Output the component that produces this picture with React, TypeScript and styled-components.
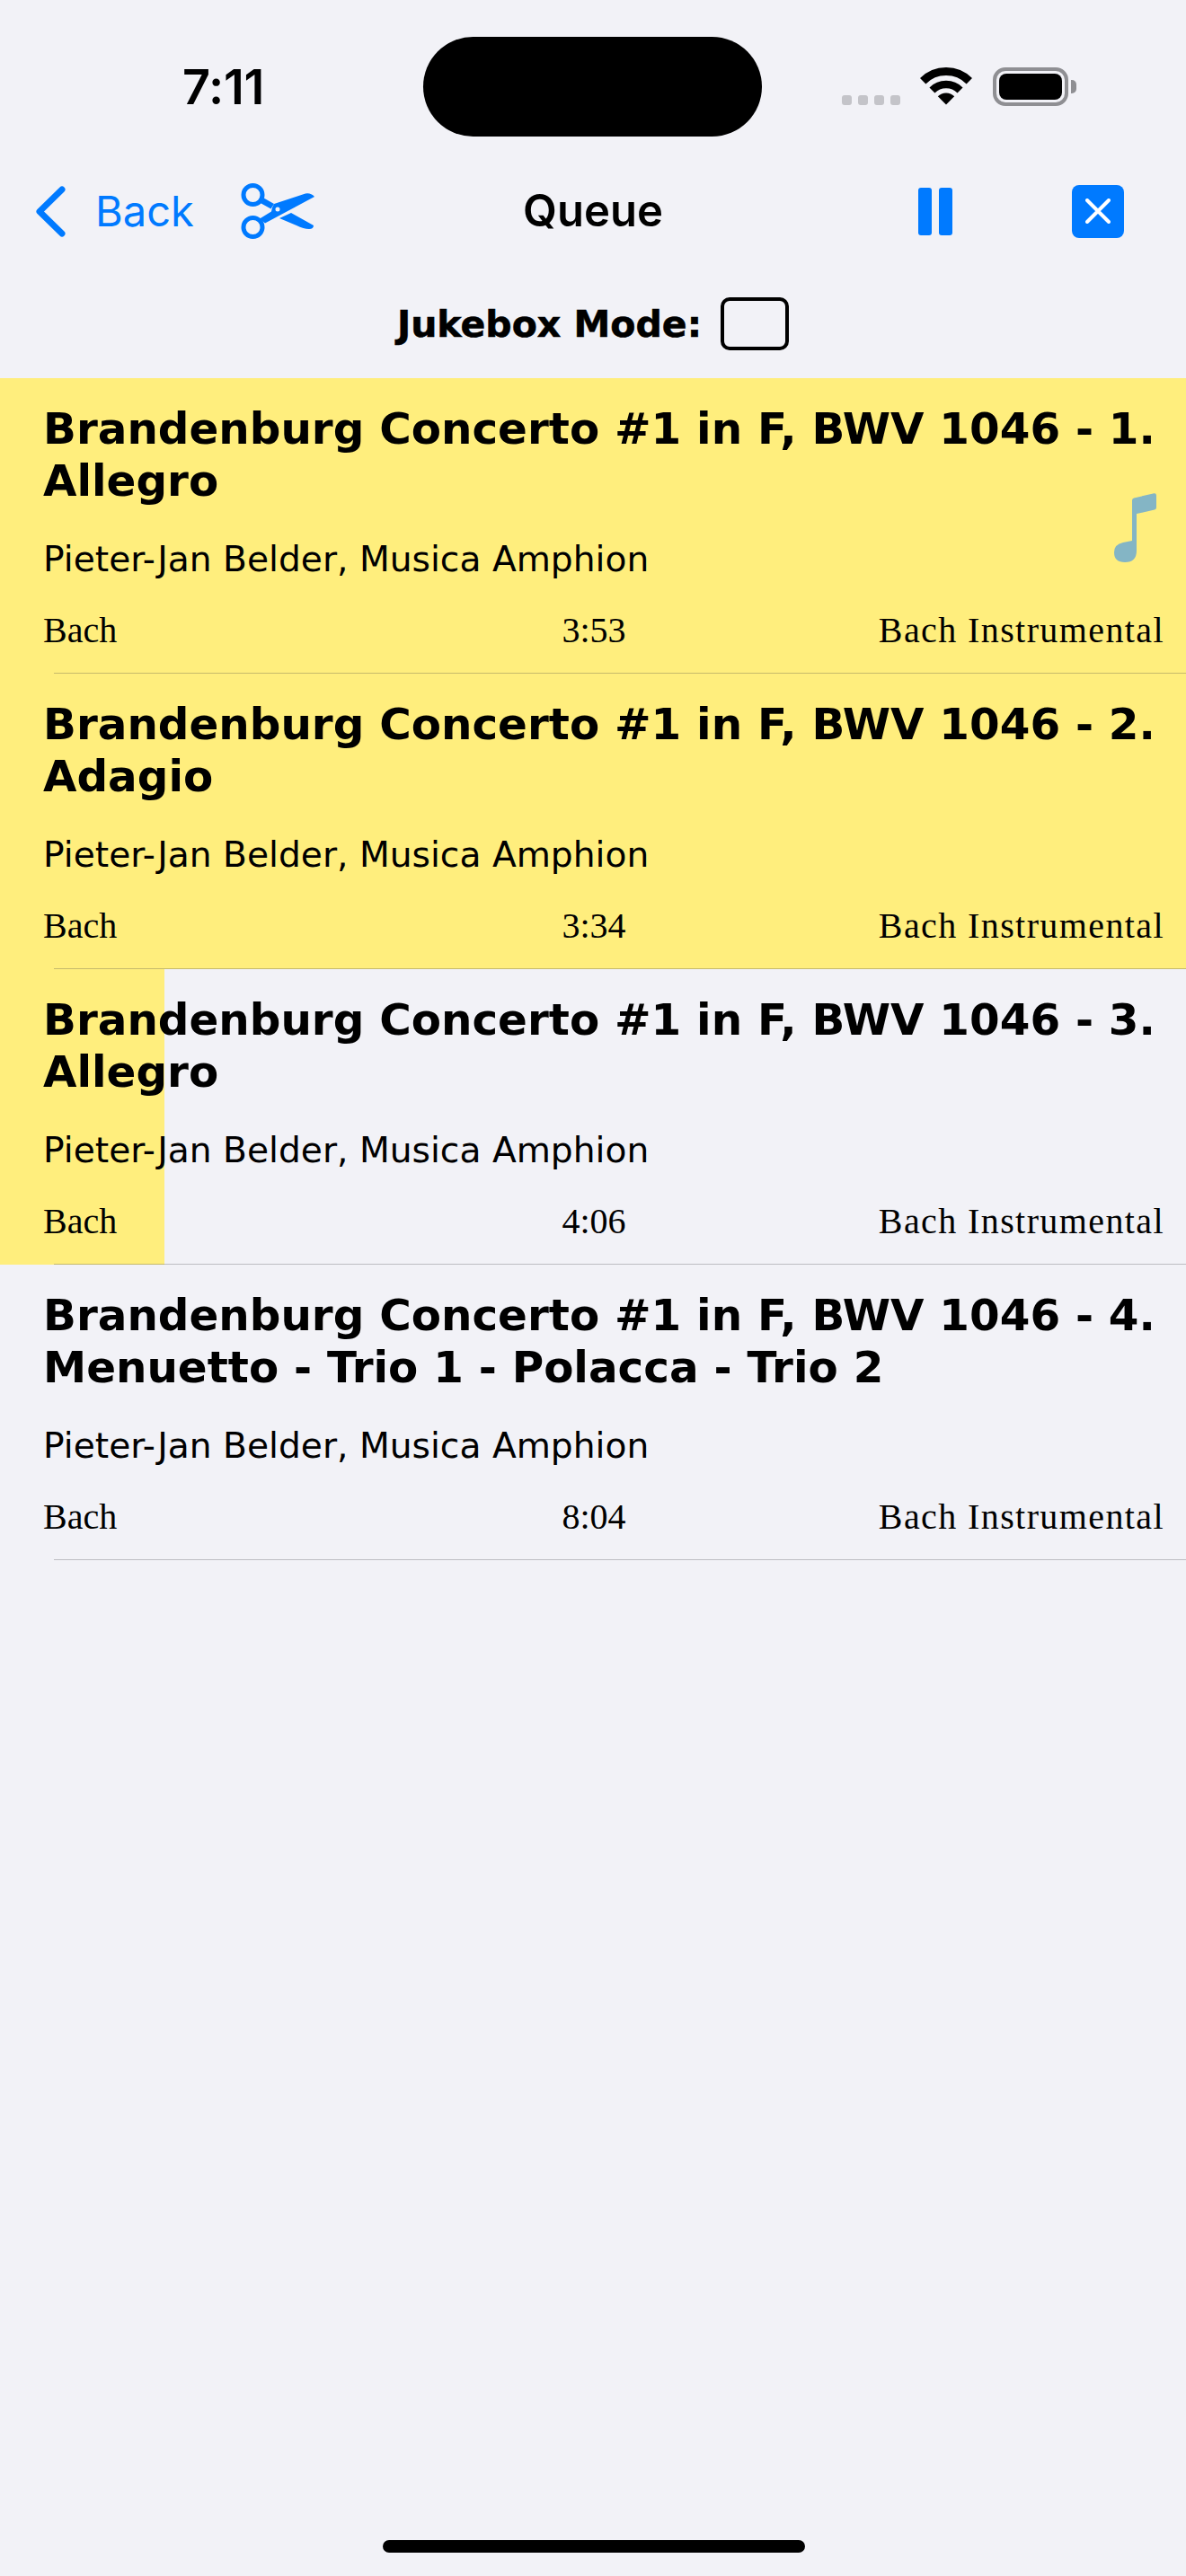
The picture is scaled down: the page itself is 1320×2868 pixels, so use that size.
import React from "react";
import styled, { createGlobalStyle } from "styled-components";

const tracks = [
    { part: "1. Allegro", time: "3:53", progress: 100, playing: true },
    { part: "2. Adagio", time: "3:34", progress: 100, playing: false },
    { part: "3. Allegro", time: "4:06", progress: 13.86, playing: false },
    { part: "4. Menuetto - Trio 1 - Polacca - Trio 2", time: "8:04", progress: 0, playing: false },
];

const App = () => (
    <Page>
        <GlobalStyle />
        <StatusBar>
            <Clock>7:11</Clock>
            <Island />
            <StatusIcons>
                <Dots>
                    <Dot />
                    <Dot />
                    <Dot />
                    <Dot />
                </Dots>
                <svg width="58" height="42" viewBox="0 0 58 42">
                    <path d="M3.2 15.2A36.5 36.5 0 0 1 54.8 15.2" fill="none" stroke="#000" strokeWidth="9" />
                    <path d="M13.44 25.44A22 22 0 0 1 44.56 25.44" fill="none" stroke="#000" strokeWidth="8.5" />
                    <path d="M29 41.5L19.8 32.3A13 13 0 0 1 38.2 32.3Z" fill="#000" />
                </svg>
                <Battery>
                    <BatteryFill />
                    <BatteryNub />
                </Battery>
            </StatusIcons>
        </StatusBar>

        <NavBar>
            <NavLeft>
                <svg width="33" height="57" viewBox="0 0 33 57">
                    <path d="M29 4L4 28.5L29 53" fill="none" stroke="#007aff" strokeWidth="7" strokeLinecap="round" strokeLinejoin="round" />
                </svg>
                <BackLabel>Back</BackLabel>
                <svg width="82" height="62" viewBox="0 0 82 62">
                    <g fill="none" stroke="#007aff" strokeWidth="5">
                        <circle cx="13.5" cy="13" r="10.5" />
                        <circle cx="13.5" cy="49" r="10.5" />
                    </g>
                    <path d="M23 15L37 23L33.5 28.5L20 21Z" fill="#007aff" />
                    <path
                        fillRule="evenodd"
                        d="M37 23L72 11.5Q78 10.5 82 15L27 44.5L21 39.5L34 31.5Q35 26 37 23ZM41 26.5A2.5 2.5 0 1 0 41 31.5A2.5 2.5 0 1 0 41 26.5Z"
                        fill="#007aff"
                    />
                    <path d="M43 39L56 33L81 47Q81 51 76 51Q70 51 62 47Z" fill="#007aff" />
                </svg>
            </NavLeft>
            <NavTitle>Queue</NavTitle>
            <NavRight>
                <PauseIcon>
                    <PauseBar />
                    <PauseBar />
                </PauseIcon>
                <CloseBox>
                    <svg width="28" height="28" viewBox="0 0 28 28">
                        <path d="M2 2L26 26M26 2L2 26" stroke="#fff" strokeWidth="4" strokeLinecap="round" />
                    </svg>
                </CloseBox>
            </NavRight>
        </NavBar>

        <JukeboxRow>
            <JukeboxLabel>Jukebox Mode:</JukeboxLabel>
            <Checkbox />
        </JukeboxRow>

        <List>
            {tracks.map((track) => (
                <Row key={track.part} $progress={track.progress}>
                    <Title>{`Brandenburg Concerto #1 in F, BWV 1046 - ${track.part}`}</Title>
                    <Artist>Pieter-Jan Belder, Musica Amphion</Artist>
                    <Meta>
                        <Composer>Bach</Composer>
                        <MetaText>{track.time}</MetaText>
                        <Genre>Bach Instrumental</Genre>
                    </Meta>
                    {track.playing && (
                        <NowPlaying width="47" height="77" viewBox="0 0 47 77">
                            <path
                                d="M20 8Q20 6 22 5.5L44.5 .2Q47 0 47 2.5L47 16Q47 18 45 18.5L25 23L25 64Q25 77 12 77Q0 77 0 66Q0 57 10 55L20 53Z"
                                fill="#84b5c5"
                            />
                        </NowPlaying>
                    )}
                </Row>
            ))}
        </List>

        <HomeIndicator />
    </Page>
);

export default App;

const GlobalStyle = createGlobalStyle`
    html, body {
        margin: 0;
        padding: 0;
        background: #f2f2f7;
    }
`;

const Page = styled.div`
    position: relative;
    height: 2868px;
    overflow: hidden;
    background: #f2f2f7;
    color: #000;
    font-family: Inter, sans-serif;
`;

const StatusBar = styled.div`
    display: grid;
    grid-template-columns: 471px 377px 1fr;
    height: 111px;
    padding-top: 41px;
`;

const Clock = styled.div`
    align-self: center;
    padding-left: 203px;
    font-size: 54px;
    font-weight: 600;
    line-height: 60px;
    letter-spacing: -0.3px;
`;

const Island = styled.div`
    background: #000;
    border-radius: 56px;
`;

const StatusIcons = styled.div`
    display: flex;
    align-items: flex-start;
    padding: 34px 0 0 89px;
`;

const Dots = styled.div`
    display: flex;
    gap: 7px;
    margin-top: 31px;
    margin-right: 22px;
`;

const Dot = styled.span`
    width: 11px;
    height: 11px;
    border-radius: 3px;
    background: #c4c4c9;
`;

const Battery = styled.div`
    position: relative;
    box-sizing: border-box;
    width: 84px;
    height: 43px;
    margin-left: 23px;
    padding: 3px;
    border: 4px solid #8f8f93;
    border-radius: 14px;
`;

const BatteryFill = styled.div`
    height: 100%;
    background: #000;
    border-radius: 8px;
`;

const BatteryNub = styled.span`
    position: absolute;
    top: 10px;
    right: -13px;
    width: 6px;
    height: 15px;
    background: #8f8f93;
    border-radius: 0 5px 5px 0;
`;

const NavBar = styled.div`
    display: grid;
    grid-template-columns: 1fr auto 1fr;
    align-items: center;
    height: 130px;
    margin-top: 18px;
`;

const NavLeft = styled.div`
    display: flex;
    align-items: center;
    padding-left: 40px;
`;

const BackLabel = styled.span`
    margin: 0 52px 0 33px;
    color: #007aff;
    font-size: 47px;
    font-weight: 400;
    line-height: 60px;
`;

const NavTitle = styled.div`
    font-size: 49px;
    font-weight: 600;
    line-height: 60px;
`;

const NavRight = styled.div`
    display: flex;
    align-items: center;
    justify-content: flex-end;
    gap: 133px;
    padding-right: 69px;
`;

const PauseIcon = styled.div`
    display: flex;
    gap: 8px;
`;

const PauseBar = styled.span`
    width: 15px;
    height: 53px;
    background: #007aff;
    border-radius: 3px;
`;

const CloseBox = styled.div`
    display: flex;
    align-items: center;
    justify-content: center;
    width: 58px;
    height: 59px;
    background: #007aff;
    border-radius: 8px;
`;

const JukeboxRow = styled.div`
    display: flex;
    align-items: center;
    justify-content: center;
    gap: 21px;
    height: 121px;
`;

const JukeboxLabel = styled.span`
    font-family: "DejaVu Sans", sans-serif;
    font-size: 41px;
    font-weight: 700;
    line-height: 50px;
    -webkit-text-stroke: 0.6px #000;
`;

const Checkbox = styled.span`
    box-sizing: border-box;
    width: 76px;
    height: 59px;
    border: 4px solid #000;
    border-radius: 10px;
`;

const List = styled.div`
    display: flex;
    flex-direction: column;
`;

const Row = styled.div<{ $progress: number }>`
    position: relative;
    box-sizing: border-box;
    height: 329px;
    padding: 27px 24px 0 26px;
    background: linear-gradient(
        to right,
        #ffee7d ${(props) => props.$progress}%,
        transparent ${(props) => props.$progress}%
    );

    &::after {
        content: "";
        position: absolute;
        left: 60px;
        right: 0;
        bottom: 0;
        height: 1.5px;
        background: rgba(60, 60, 67, 0.29);
    }
`;

const Title = styled.div`
    margin-left: 22px;
    font-family: "DejaVu Sans", sans-serif;
    font-size: 48.4px;
    font-weight: 700;
    line-height: 58px;
`;

const Artist = styled.div`
    margin: 34px 0 0 22px;
    font-family: "DejaVu Sans", sans-serif;
    font-size: 39.2px;
    line-height: 50px;
`;

const Meta = styled.div`
    display: grid;
    grid-template-columns: 1fr auto 1fr;
    margin-top: 30px;
`;

const MetaText = styled.span`
    font-family: "Liberation Serif", serif;
    font-size: 40px;
    line-height: 48px;
`;

const Composer = styled(MetaText)`
    margin-left: 22px;
`;

const Genre = styled(MetaText)`
    text-align: right;
    letter-spacing: 1.4px;
`;

const NowPlaying = styled.svg`
    position: absolute;
    top: 128px;
    right: 33px;
`;

const HomeIndicator = styled.div`
    position: absolute;
    left: 426px;
    bottom: 26px;
    width: 470px;
    height: 14px;
    background: #000;
    border-radius: 7px;
`;
